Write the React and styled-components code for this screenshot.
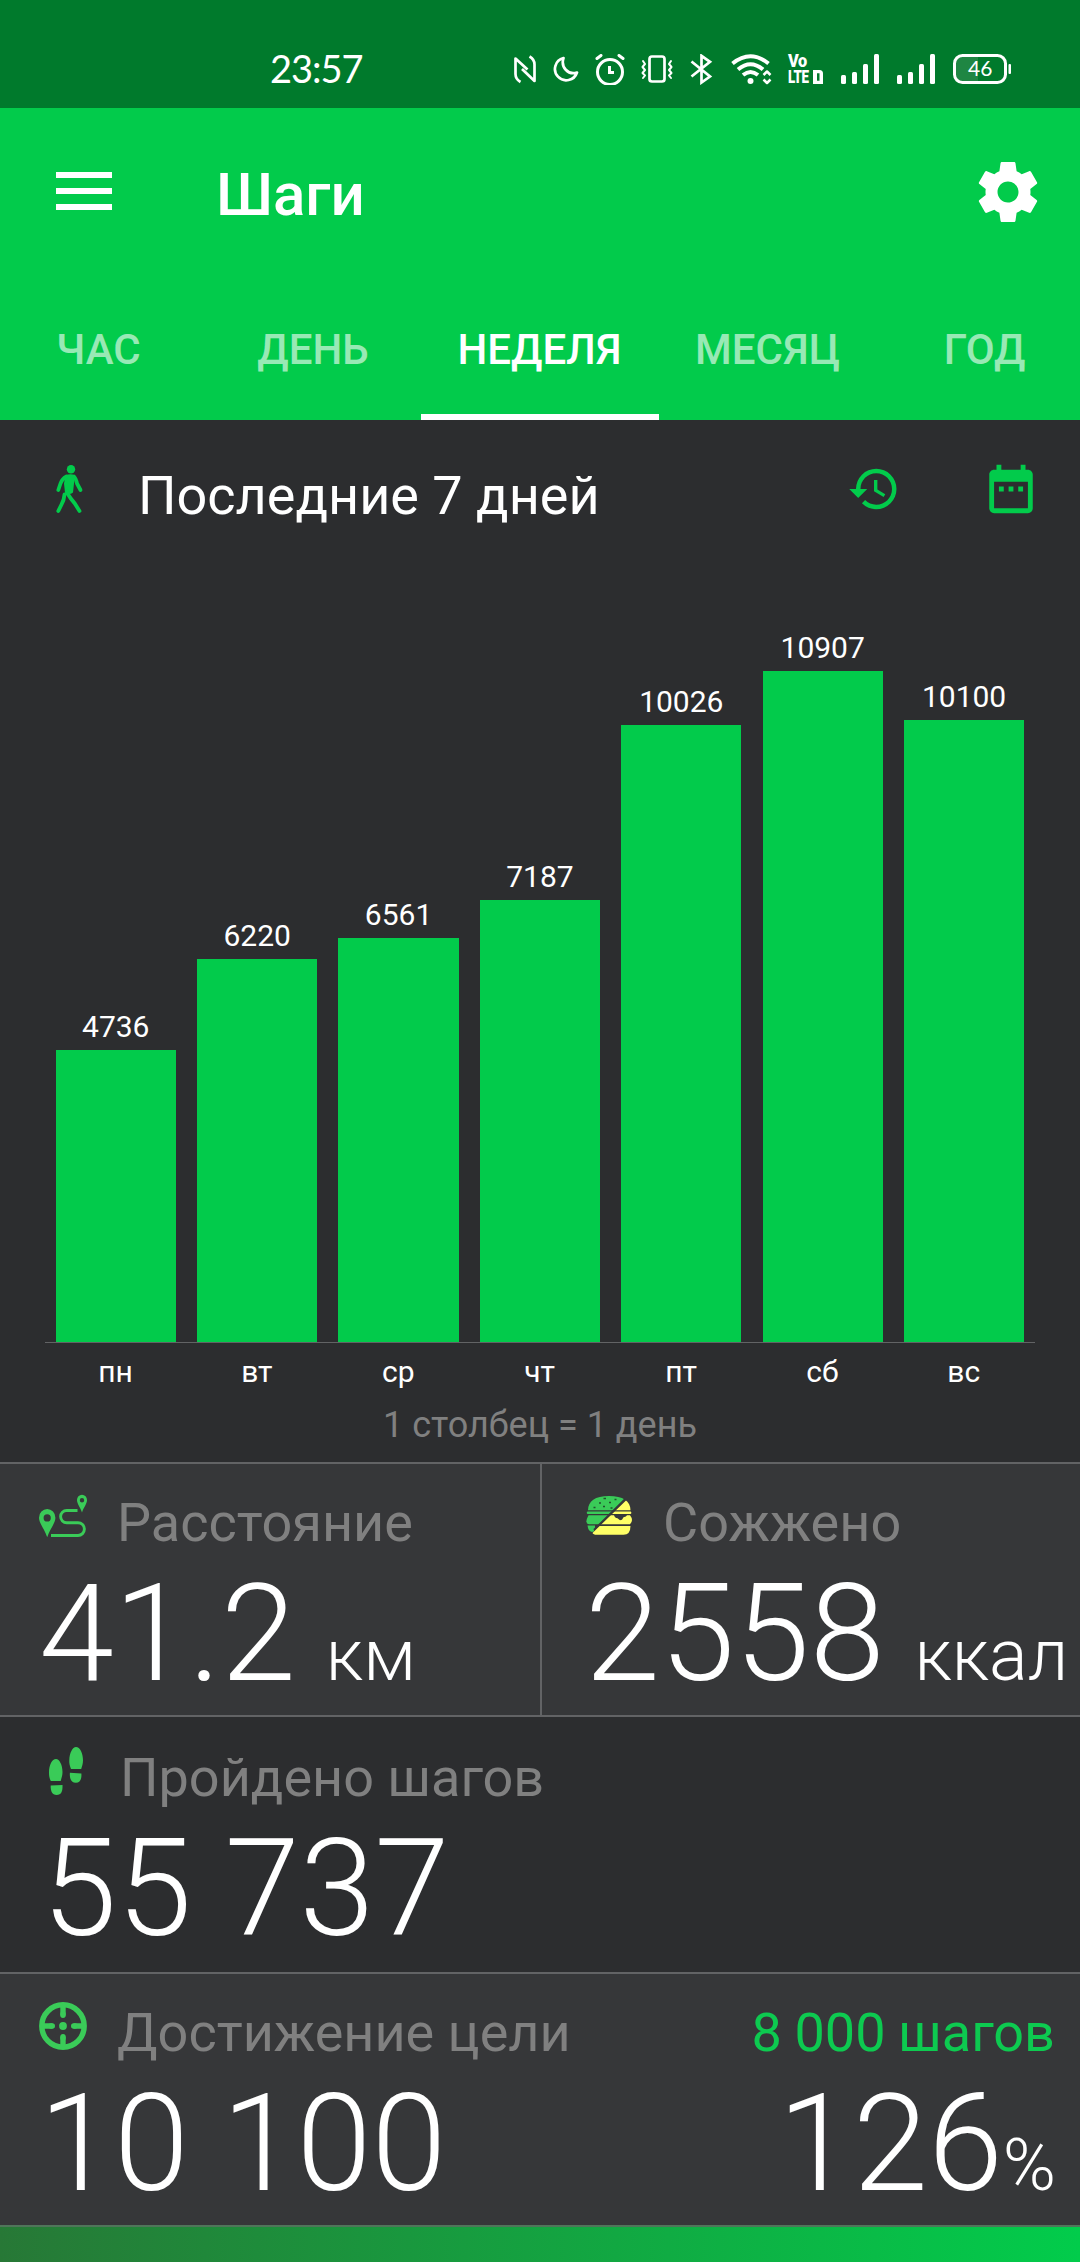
import React from "react";
import styled, { createGlobalStyle } from "styled-components";

const GREEN = "#02cb4b";
const SOFT_GREEN = "#3acb58";
const DARK = "#2c2d2f";
const PANEL = "#363739";
const LINE = "#626365";
const MUTED = "#808080";

const GlobalStyle = createGlobalStyle`
  * { box-sizing: border-box; }
  body {
    margin: 0;
    background: ${DARK};
    color: #fff;
    font-family: Roboto, "Liberation Sans", sans-serif;
  }
  svg { display: block; flex: none; }
`;

const Screen = styled.main`
  width: 1080px;
  height: 2262px;
  display: flex;
  flex-direction: column;
  overflow: hidden;
  background: ${DARK};
`;

/* ---------- status bar ---------- */

const StatusBar = styled.div`
  height: 108px;
  padding: 54px 69px 0 270px;
  display: flex;
  justify-content: space-between;
  background: #007a2c;
`;

const Clock = styled.time`
  font: 400 38px/28px Lato, sans-serif;
  letter-spacing: -1px;
`;

const StatusIcons = styled.div`
  display: flex;
  align-items: flex-start;
`;

const Glyph = styled.svg`
  margin-left: ${(p) => p.$gap || 0}px;
`;

const Lte = styled.div`
  width: 36px;
  height: 30px;
  margin-left: 15px;
  display: flex;
  flex-direction: column;
  justify-content: space-between;
  font-family: Roboto, sans-serif;
  font-weight: 900;
  font-size: 19px;
  line-height: 14px;
`;

const LteRow = styled.span`
  display: flex;
  align-items: center;
  gap: 3px;
  height: 14px;
  letter-spacing: -0.5px;
`;

const LteText = styled.span`
  width: 22px;
  transform: scaleX(${(p) => p.$squeeze});
  transform-origin: left;
  line-height: 14px;
`;

/* ---------- app bar ---------- */

const Header = styled.header`
  height: 312px;
  background: ${GREEN};
`;

const AppBar = styled.div`
  height: 168px;
  padding: 0 36px 0 56px;
  display: flex;
  align-items: center;
`;

const Menu = styled.button`
  width: 56px;
  height: 38px;
  margin-bottom: 2px;
  padding: 0;
  border: 0;
  background: none;
  display: flex;
  flex-direction: column;
  justify-content: space-between;
`;

const MenuLine = styled.span`
  height: 6px;
  width: 56px;
  background: #fff;
`;

const Title = styled.h1`
  flex: 1;
  margin: 0;
  padding: 5px 0 0 104px;
  font-size: 60px;
  font-weight: 500;
  line-height: 72px;
`;

const Tabs = styled.nav`
  height: 144px;
  margin-left: -8px;
  display: flex;
`;

const Tab = styled.div`
  flex: none;
  width: ${(p) => p.$width}px;
  height: 144px;
  padding: 4px 1px 0 0;
  border-bottom: 6px solid ${(p) => (p.$active ? "#fff" : "transparent")};
  text-align: center;
  font-size: 42px;
  font-weight: 500;
  line-height: 140px;
  color: ${(p) => (p.$active ? "#fff" : "rgba(255, 255, 255, 0.6)")};
`;

/* ---------- chart ---------- */

const PeriodRow = styled.div`
  height: 138px;
  padding: 0 40px 0 45px;
  display: flex;
  align-items: center;
`;

const Period = styled.h2`
  flex: 1;
  margin: 0;
  padding: 13px 0 0 45px;
  font-size: 54px;
  font-weight: 400;
  line-height: 64px;
`;

const CalendarIcon = styled.svg`
  margin-left: 81px;
`;

const Chart = styled.section`
  height: 785px;
  margin: 0 45px;
  padding: 0 10.6px;
  display: flex;
  align-items: flex-end;
  gap: 21.1px;
  border-bottom: 1px solid ${LINE};
`;

const Column = styled.div`
  flex: none;
  width: 120.3px;
  display: flex;
  flex-direction: column;
  align-items: center;
`;

const Count = styled.span`
  font-size: 30px;
  line-height: 36px;
  margin-bottom: 5px;
`;

const Bar = styled.div`
  width: 100%;
  background: ${GREEN};
`;

const Days = styled.div`
  margin: 0 55.3px;
  display: flex;
  gap: 21.1px;
`;

const Day = styled.span`
  width: 120.3px;
  text-align: center;
  font-size: 30px;
  line-height: 57px;
`;

const Caption = styled.p`
  margin: 0;
  height: 62px;
  text-align: center;
  font-size: 36px;
  line-height: 50px;
  color: ${MUTED};
`;

/* ---------- statistics ---------- */

const SplitRow = styled.section`
  display: grid;
  grid-template-columns: 540px 540px;
`;

const Stat = styled.div`
  height: ${(p) => p.$height}px;
  padding: ${(p) => p.$top || 0}px 0 0 ${(p) => p.$left}px;
  border-top: 2px solid ${LINE};
  ${(p) => p.$divided && `border-left: 2px solid ${LINE};`}
  background: ${(p) => (p.$dark ? DARK : PANEL)};
  white-space: nowrap;
`;

const StatHead = styled.div`
  height: 117px;
  padding-right: 25px;
  display: flex;
  gap: 30px;
`;

const IconSlot = styled.span`
  padding-top: 28px;
`;

const StatLabel = styled.span`
  flex: 1;
  font-size: 54px;
  line-height: 117px;
  color: ${MUTED};
`;

const Target = styled.span`
  font-size: 54px;
  line-height: 117px;
  word-spacing: -0.8px;
  color: #0dca50;
`;

const ValueRow = styled.div`
  display: flex;
  justify-content: space-between;
  padding-right: 24px;
`;

const Value = styled.div`
  font-size: 135px;
  font-weight: 300;
  line-height: 106px;
`;

const Unit = styled.span`
  margin-left: ${(p) => p.$shift || 0}px;
  font-size: 72px;
  line-height: 0;
`;

const GoalBar = styled.div`
  height: 37px;
  border-top: 2px solid #50755a;
  background: linear-gradient(90deg, #277836, #02cc4b) padding-box;
`;

/* ---------- icons ---------- */

const stroke = {
  fill: "none",
  stroke: "#fff",
  strokeWidth: 3,
  strokeLinecap: "round",
  strokeLinejoin: "round",
};

const Signal = ({ gap }) => (
  <Glyph $gap={gap} width="38" height="30" fill="#fff">
    <rect x="0" y="21" width="5" height="9" rx="1.5" />
    <rect x="11" y="18" width="5" height="12" rx="1.5" />
    <rect x="22" y="10" width="5" height="20" rx="1.5" />
    <rect x="33" y="0" width="5" height="30" rx="1.5" />
  </Glyph>
);

const StatusGlyphs = () => (
  <StatusIcons>
    <Glyph width="22" height="30" {...stroke} strokeWidth="2.7" strokeLinecap="butt">
      <path d="M6.500 28C3 26 1.500 24 1.500 20V4.500L13.500 15.500M15.500 2.500c3.500 2 5 4 5 8v16.500L8 15" />
    </Glyph>
    <Glyph $gap={17} width="26" height="30" {...stroke} strokeWidth="2.7">
      <path d="M10.500 4A11.300 11.300 0 1 0 24 18.500C15 21.500 7.500 13 10.500 4Z" />
    </Glyph>
    <Glyph $gap={16} width="30" height="31" {...stroke}>
      <circle cx="15" cy="18" r="12.500" />
      <path d="M2 4.500 6 1.500M28 4.500 24 1.500" />
      <path d="M14.500 12v6.500H19" strokeLinecap="butt" strokeLinejoin="miter" />
    </Glyph>
    <Glyph $gap={16} width="32" height="30" {...stroke} strokeWidth="2.700">
      <rect x="8.500" y="2.500" width="15" height="25" rx="2.500" />
      <path d="M2 7l2 3-2.500 3 2.500 3-2.500 3 2.500 2.500-2 2.500M30 7l-2 3 2.500 3-2.500 3 2.500 3-2.500 2.500 2 2.500" strokeWidth="2" />
    </Glyph>
    <Glyph $gap={17} width="23" height="31" {...stroke} strokeLinecap="butt" strokeLinejoin="miter" strokeWidth="2.700">
      <path d="M1.500 7.500 20 22.500l-8.500 6V1.800l8.500 6L1.500 22.500" />
    </Glyph>
    <Glyph $gap={18} width="42" height="31" {...stroke} strokeWidth="4" strokeLinecap="butt">
      <path d="M1.500 9.500Q19.500-5 37.500 9.500M7 15.500Q19.500 5 32 15.500M12 21Q19.500 15 27 21" />
      <circle cx="19.500" cy="27" r="3" fill="#fff" stroke="none" />
      <path d="M32.500 21l3.500-3.500 3.500 3.500M32.500 25.500l3.500 3.500 3.500-3.500" strokeWidth="2.500" />
    </Glyph>
    <Lte>
      <LteRow>
        <LteText $squeeze={0.86}>Vo</LteText>
      </LteRow>
      <LteRow>
        <LteText $squeeze={0.7}>LTE</LteText>
        <svg width="10" height="14" fill="#fff">
          <path d="M0 0h6.500q3.500 0 3.500 3.500V14H0zm4 3.200v7.600h2.500V3.200z" fillRule="evenodd" />
        </svg>
      </LteRow>
    </Lte>
    <Signal gap={17} />
    <Signal gap={18} />
    <Glyph $gap={18} width="58" height="30">
      <path d="M9 3h16v24H9a6 6 0 0 1-6-6V9a6 6 0 0 1 6-6Z" fill="#1f8643" />
      <rect x="1.500" y="1.500" width="51" height="27" rx="8" fill="none" stroke="#fff" strokeWidth="3" />
      <rect x="55.500" y="10" width="2.500" height="10" rx="1" fill="#fff" />
      <text x="15" y="22.300" fontFamily="Lato" fontSize="21" fill="#fff">46</text>
    </Glyph>
  </StatusIcons>
);

const GearIcon = () => (
  <svg width="72" height="72" viewBox="0 0 24 24" fill="#fff">
    <path d="M19.430 12.980c.04-.32.07-.64.07-.98s-.03-.66-.07-.98l2.110-1.650c.19-.15.24-.42.12-.64l-2-3.460c-.12-.22-.39-.3-.61-.22l-2.490 1c-.52-.4-1.080-.73-1.690-.98l-.38-2.650C14.460 2.180 14.250 2 14 2h-4c-.25 0-.46.18-.49.42l-.38 2.650c-.61.25-1.170.59-1.690.98l-2.490-1c-.23-.09-.49 0-.61.22l-2 3.460c-.13.22-.07.49.12.64l2.110 1.650c-.04.32-.07.65-.07.98s.03.66.07.98l-2.110 1.650c-.19.15-.24.42-.12.64l2 3.460c.12.22.39.3.61.22l2.490-1c.52.4 1.080.73 1.690.98l.38 2.650c.03.24.24.42.49.42h4c.25 0 .46-.18.49-.42l.38-2.650c.61-.25 1.170-.59 1.690-.98l2.490 1c.23.09.49 0 .61-.22l2-3.460c.12-.22.07-.49-.12-.64l-2.110-1.650zM12 15.500c-1.930 0-3.500-1.570-3.500-3.500s1.570-3.500 3.500-3.500 3.500 1.570 3.500 3.500-1.570 3.500-3.500 3.500z" />
  </svg>
);

const WalkIcon = () => (
  <svg width="48" height="48" fill="none" stroke={GREEN} strokeWidth="3.800" strokeLinecap="round" strokeLinejoin="round">
    <ellipse cx="26" cy="4.300" rx="4.200" ry="4.300" fill={GREEN} stroke="none" />
    <path d="M20.500 10.500q5-2.500 9.500 0l-1 8-1 9q-4 3-8 0l-1-9Z" fill={GREEN} stroke="none" />
    <path d="M21.500 11.500q-4.500 2.500-6 7L13.300 25M29 11.500q2 2 3 7L35.500 25" />
    <path d="M21.800 26q1.200 4 4 7.500l4 5L34.500 46M19.500 29.500q-.5 6-3 10L13.300 46" />
  </svg>
);

const HistoryIcon = () => (
  <svg width="54" height="54" viewBox="0 0 24 24" fill={GREEN}>
    <path d="M13 3a9 9 0 0 0-9 9H1l3.890 3.890.07.14L9 12H6c0-3.870 3.130-7 7-7s7 3.130 7 7-3.130 7-7 7c-1.930 0-3.680-.79-4.940-2.060l-1.420 1.420A8.954 8.954 0 0 0 13 21a9 9 0 0 0 0-18zm-1 5v5l4.280 2.540.72-1.210-3.500-2.080V8H12z" />
  </svg>
);

const DateRangeIcon = () => (
  <CalendarIcon width="58" height="58" viewBox="0 0 24 24" fill={GREEN}>
    <path d="M9 11H7v2h2v-2zm4 0h-2v2h2v-2zm4 0h-2v2h2v-2zm2-7h-1V2h-2v2H8V2H6v2H5c-1.110 0-1.990.9-1.990 2L3 20a2 2 0 0 0 2 2h14c1.100 0 2-.9 2-2V6c0-1.100-.9-2-2-2zm0 16H5V9h14v11z" />
  </CalendarIcon>
);

const RouteIcon = () => (
  <svg width="48" height="48" fill={SOFT_GREEN}>
    <path fillRule="evenodd" d="M8.200 17A8.200 8.700 0 0 1 16.400 25.700C16.400 31 11 37 8.200 45.300 5.400 37 0 31 0 25.700A8.200 8.700 0 0 1 8.200 17Zm0 5.200a3.600 3.700 0 1 0 0 7.400 3.600 3.700 0 0 0 0-7.400Z" />
    <path fillRule="evenodd" d="M43 2.700a5 5.400 0 0 1 5 5.500c0 3.300-3.200 7-5 12.200-1.800-5.200-5-8.900-5-12.200a5 5.400 0 0 1 5-5.500Zm0 3.300a2.200 2.300 0 1 0 0 4.600 2.200 2.300 0 0 0 0-4.600Z" />
    <path fill="none" stroke={SOFT_GREEN} strokeWidth="2.900" d="M38.500 18.500H27.700a6.100 6.100 0 0 0 0 12.200H39a6.400 6.400 0 0 1 0 12.800H12" />
  </svg>
);

const BurgerIcon = () => (
  <svg width="48" height="48">
    <clipPath id="burger-left">
      <path d="M0 0H46L8.500 37 10 42 0 48Z" />
    </clipPath>
    <clipPath id="burger-right">
      <path d="M48 0 41 8.500 7.500 41V48H48Z" />
    </clipPath>
    <g clipPath="url(#burger-left)" fill={SOFT_GREEN}>
      <path d="M3 18.300C3 9 10 4 24 4s21.500 5 21.500 14.300Z" />
      <rect x="1.800" y="19.500" width="44.500" height="2.500" rx="1" />
      <path d="M3.500 23.200H45q3 9-2 9H4q-5-.5-.5-9Z" />
      <path d="M2.500 33.500H10V39l-3 1q-4-1-4.500-6.500Z" />
      <path d="M18.500 6.500h2.500M14 11h2M24 10.500h2M29.500 7.500h2M8.500 15.500h2M18 14.500h2M25.500 16h2" stroke="#23502f" strokeWidth="1.300" />
    </g>
    <g clipPath="url(#burger-right)" fill="#ffff66">
      <path d="M3 18.300C3 9 10 4 24 4s21.500 5 21.500 14.300Z" />
      <rect x="1.800" y="19.500" width="44.500" height="2.500" rx="1" />
      <path d="M20 23.200H29q1 3 3.500 3l2.500 2 2-.5 1.500-2.500q3-.5 3.500-2h3q4 5 0 9H15Z" />
      <path d="M3 34H45.500q0 8.700-7 8.700H10q-4-.5-7-8.700Z" />
    </g>
  </svg>
);

const FeetIcon = () => (
  <svg width="48" height="48" fill={SOFT_GREEN}>
    <path d="M34 0c4 0 7 6 7 13.500 0 3-1 6-1.800 8.500H29c-1.200-3-2-6-1.700-9C27.500 6 30.500 0 34 0Z" />
    <path d="M27.900 25.700l11.500.9c.3 5-1 9.200-5.500 9.200-4.800 0-6.500-4.300-6-10.100Z" />
    <path d="M14 12c3.500 0 6.500 6 6.500 13 0 3.500-1 6-1.800 9H8.800C7.500 31.500 7 29 7 25.500 7 18 10 12 14 12Z" />
    <path d="M8.700 38.600 20.500 38c.3 6-1 10-6 10-4.300 0-6-3.500-5.800-9.400Z" />
  </svg>
);

const TargetIcon = () => (
  <svg width="48" height="48" fill="none" stroke={SOFT_GREEN} strokeWidth="5.400">
    <circle cx="24" cy="24" r="21.200" />
    <path d="M24 4V13.500M24 34.500V44M4 24H13.500M34.500 24H44" />
    <path d="M24 12V13.300M24 34.700V36M12 24H13.300M34.700 24H36" strokeLinecap="round" />
    <circle cx="24" cy="24" r="3.900" fill={SOFT_GREEN} stroke="none" />
  </svg>
);

/* ---------- data ---------- */

const TABS = [
  { label: "ЧАС", width: 214 },
  { label: "ДЕНЬ", width: 215 },
  { label: "НЕДЕЛЯ", width: 238, active: true },
  { label: "МЕСЯЦ", width: 218 },
  { label: "ГОД", width: 216 },
];

const WEEK = [
  { day: "пн", steps: 4736 },
  { day: "вт", steps: 6220 },
  { day: "ср", steps: 6561 },
  { day: "чт", steps: 7187 },
  { day: "пт", steps: 10026 },
  { day: "сб", steps: 10907 },
  { day: "вс", steps: 10100 },
];

const PX_PER_STEP = 671.4 / 10907;

export default function App() {
  return (
    <>
      <GlobalStyle />
      <Screen>
        <StatusBar>
          <Clock>23:57</Clock>
          <StatusGlyphs />
        </StatusBar>

        <Header>
          <AppBar>
            <Menu aria-label="Меню">
              <MenuLine />
              <MenuLine />
              <MenuLine />
            </Menu>
            <Title>Шаги</Title>
            <GearIcon />
          </AppBar>
          <Tabs>
            {TABS.map((t) => (
              <Tab key={t.label} $width={t.width} $active={t.active}>
                {t.label}
              </Tab>
            ))}
          </Tabs>
        </Header>

        <PeriodRow>
          <WalkIcon />
          <Period>Последние 7 дней</Period>
          <HistoryIcon />
          <DateRangeIcon />
        </PeriodRow>

        <Chart>
          {WEEK.map((d) => (
            <Column key={d.day}>
              <Count>{d.steps}</Count>
              <Bar style={{ height: Math.round(d.steps * PX_PER_STEP) }} />
            </Column>
          ))}
        </Chart>
        <Days>
          {WEEK.map((d) => (
            <Day key={d.day}>{d.day}</Day>
          ))}
        </Days>
        <Caption>1 столбец = 1 день</Caption>

        <SplitRow>
          <Stat $height={253} $left={39}>
            <StatHead>
              <IconSlot><RouteIcon /></IconSlot>
              <StatLabel>Расстояние</StatLabel>
            </StatHead>
            <Value>
              41.2 <Unit $shift={-3}>км</Unit>
            </Value>
          </Stat>
          <Stat $height={253} $left={43} $divided>
            <StatHead>
              <IconSlot><BurgerIcon /></IconSlot>
              <StatLabel>Сожжено</StatLabel>
            </StatHead>
            <Value>
              2558 <Unit $shift={-3}>ккал</Unit>
            </Value>
          </Stat>
        </SplitRow>

        <Stat $height={257} $left={42} $top={2} $dark>
          <StatHead>
            <IconSlot><FeetIcon /></IconSlot>
            <StatLabel>Пройдено шагов</StatLabel>
          </StatHead>
          <Value>55 737</Value>
        </Stat>

        <Stat $height={253} $left={39}>
          <StatHead>
            <IconSlot><TargetIcon /></IconSlot>
            <StatLabel>Достижение цели</StatLabel>
            <Target>8 000 шагов</Target>
          </StatHead>
          <ValueRow>
            <Value>10 100</Value>
            <Value>
              126<Unit>%</Unit>
            </Value>
          </ValueRow>
        </Stat>
        <GoalBar />
      </Screen>
    </>
  );
}
